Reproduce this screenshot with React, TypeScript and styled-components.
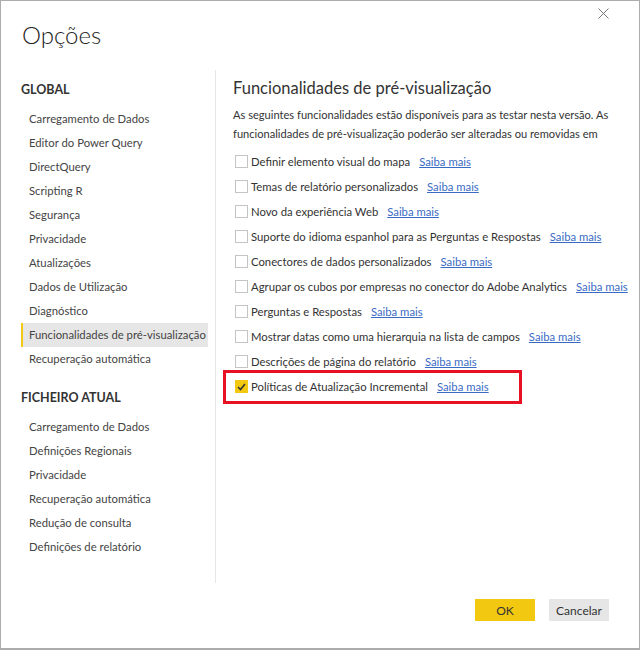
import React from 'react';
import styled, { createGlobalStyle } from 'styled-components';

const GlobalStyle = createGlobalStyle`
  html, body {
    margin: 0;
    padding: 0;
    background: #fff;
  }
  body {
    font-family: "Segoe UI", Lato, "Open Sans", sans-serif;
    color: #333;
  }
`;

const globalItems = [
  'Carregamento de Dados',
  'Editor do Power Query',
  'DirectQuery',
  'Scripting R',
  'Segurança',
  'Privacidade',
  'Atualizações',
  'Dados de Utilização',
  'Diagnóstico',
  'Funcionalidades de pré-visualização',
  'Recuperação automática',
];

const fileItems = [
  'Carregamento de Dados',
  'Definições Regionais',
  'Privacidade',
  'Recuperação automática',
  'Redução de consulta',
  'Definições de relatório',
];

const features = [
  { label: 'Definir elemento visual do mapa', checked: false },
  { label: 'Temas de relatório personalizados', checked: false },
  { label: 'Novo da experiência Web', checked: false },
  { label: 'Suporte do idioma espanhol para as Perguntas e Respostas', checked: false },
  { label: 'Conectores de dados personalizados', checked: false },
  { label: 'Agrupar os cubos por empresas no conector do Adobe Analytics', checked: false },
  { label: 'Perguntas e Respostas', checked: false },
  { label: 'Mostrar datas como uma hierarquia na lista de campos', checked: false },
  { label: 'Descrições de página do relatório', checked: false },
  { label: 'Políticas de Atualização Incremental', checked: true },
];

export default function App() {
  return (
    <>
      <GlobalStyle />
      <Dialog>
        <Header>
          <Title>Opções</Title>
          <CloseButton aria-label="Fechar">
            <svg width="11" height="11" viewBox="0 0 11 11">
              <path d="M0.5 0.5 L10.5 10.5 M10.5 0.5 L0.5 10.5" stroke="#777" strokeWidth="1" />
            </svg>
          </CloseButton>
        </Header>

        <Body>
          <Nav>
            <NavHeading>GLOBAL</NavHeading>
            {globalItems.map(item => (
              <NavItem key={item} $active={item === 'Funcionalidades de pré-visualização'}>
                {item}
              </NavItem>
            ))}
            <NavHeading $spaced>FICHEIRO ATUAL</NavHeading>
            {fileItems.map(item => (
              <NavItem key={item}>{item}</NavItem>
            ))}
          </Nav>

          <Content>
            <SectionTitle>Funcionalidades de pré-visualização</SectionTitle>
            <Description>
              <Line>As seguintes funcionalidades estão disponíveis para as testar nesta versão. As</Line>
              <Line>funcionalidades de pré-visualização poderão ser alteradas ou removidas em</Line>
            </Description>
            <Options>
              {features.map(f => (
                <OptionRow key={f.label} $highlight={f.checked}>
                  <Box $checked={f.checked}>
                    {f.checked && (
                      <svg width="9" height="8" viewBox="0 0 9 8">
                        <path d="M1 4 L3.5 6.5 L8 1" fill="none" stroke="#333" strokeWidth="1.6" />
                      </svg>
                    )}
                  </Box>
                  <OptionLabel>{f.label}</OptionLabel>
                  <MoreLink href="#">Saiba mais</MoreLink>
                </OptionRow>
              ))}
            </Options>
          </Content>
        </Body>

        <Footer>
          <Button $primary>OK</Button>
          <Button>Cancelar</Button>
        </Footer>
      </Dialog>
    </>
  );
}

const Dialog = styled.div`
  width: 640px;
  height: 650px;
  box-sizing: border-box;
  border: 1px solid #acacac;
  border-bottom-width: 2px;
  background: #fff;
  display: flex;
  flex-direction: column;
`;

const Header = styled.div`
  display: flex;
  justify-content: space-between;
  align-items: flex-start;
  height: 69px;
  padding: 0 30px 0 21px;
`;

const Title = styled.h1`
  margin: 18px 0 0;
  font-size: 24px;
  font-weight: 300;
  color: #222;
  line-height: 32px;
`;

const CloseButton = styled.button`
  margin-top: 7px;
  border: none;
  background: none;
  padding: 0;
  width: 11px;
  height: 11px;
  display: flex;
`;

const Body = styled.div`
  flex: 1;
  display: grid;
  grid-template-columns: 215px 1fr;
  min-height: 0;
`;

const Nav = styled.nav`
  border-right: 1px solid #e6e6e6;
  height: 513px;
  padding: 8px 0 0 20px;
  box-sizing: border-box;
  display: flex;
  flex-direction: column;
`;

const NavHeading = styled.div<{ $spaced?: boolean }>`
  font-size: 12.5px;
  font-weight: 700;
  color: #333;
  height: 24px;
  line-height: 24px;
  margin: ${p => (p.$spaced ? '15px' : '0')} 0 5px;
`;

const NavItem = styled.div<{ $active?: boolean }>`
  width: 187px;
  height: 24px;
  line-height: 24px;
  box-sizing: border-box;
  padding-left: ${p => (p.$active ? '6px' : '8px')};
  font-size: 11.3px;
  color: #444;
  white-space: nowrap;
  background: ${p => (p.$active ? '#e6e6e6' : 'transparent')};
  border-left: ${p => (p.$active ? '2px solid #f2c811' : 'none')};
`;

const Content = styled.section`
  padding: 6px 30px 0 17px;
  overflow: hidden;
`;

const SectionTitle = styled.h2`
  margin: 0;
  font-size: 16.5px;
  font-weight: 400;
  color: #333;
  line-height: 24px;
`;

const Description = styled.div`
  margin-top: 5px;
  font-size: 11.1px;
  line-height: 19px;
  color: #333;
`;

const Line = styled.div`
  white-space: nowrap;
`;

const Options = styled.div`
  margin-top: 6px;
  padding-left: 2px;
  display: flex;
  flex-direction: column;
`;

const OptionRow = styled.div<{ $highlight?: boolean }>`
  position: relative;
  display: flex;
  align-items: center;
  height: 25px;
  font-size: 11.3px;
  white-space: nowrap;
  ${p =>
    p.$highlight &&
    `
    &::after {
      content: '';
      position: absolute;
      left: -12px;
      top: -4.5px;
      width: 299px;
      height: 34px;
      box-sizing: border-box;
      border: 3px solid #e81123;
      pointer-events: none;
    }
  `}
`;

const Box = styled.span<{ $checked?: boolean }>`
  width: 13px;
  height: 13px;
  box-sizing: border-box;
  border: 1px solid ${p => (p.$checked ? '#f2c811' : '#c4c4c4')};
  background: ${p => (p.$checked ? '#f2c811' : '#fff')};
  display: inline-flex;
  align-items: center;
  justify-content: center;
  margin-right: 3px;
  flex-shrink: 0;
`;

const OptionLabel = styled.span`
  color: #333;
`;

const MoreLink = styled.a`
  margin-left: 9px;
  color: #3a6bc4;
  text-decoration: underline;
`;

const Footer = styled.div`
  display: flex;
  justify-content: flex-end;
  gap: 14px;
  padding: 0 30px 27px 0;
`;

const Button = styled.button<{ $primary?: boolean }>`
  width: 60px;
  height: 22px;
  border: none;
  padding: 0;
  font-family: inherit;
  font-size: 12px;
  color: #333;
  background: ${p => (p.$primary ? '#f2c811' : '#e6e6e6')};
`;
